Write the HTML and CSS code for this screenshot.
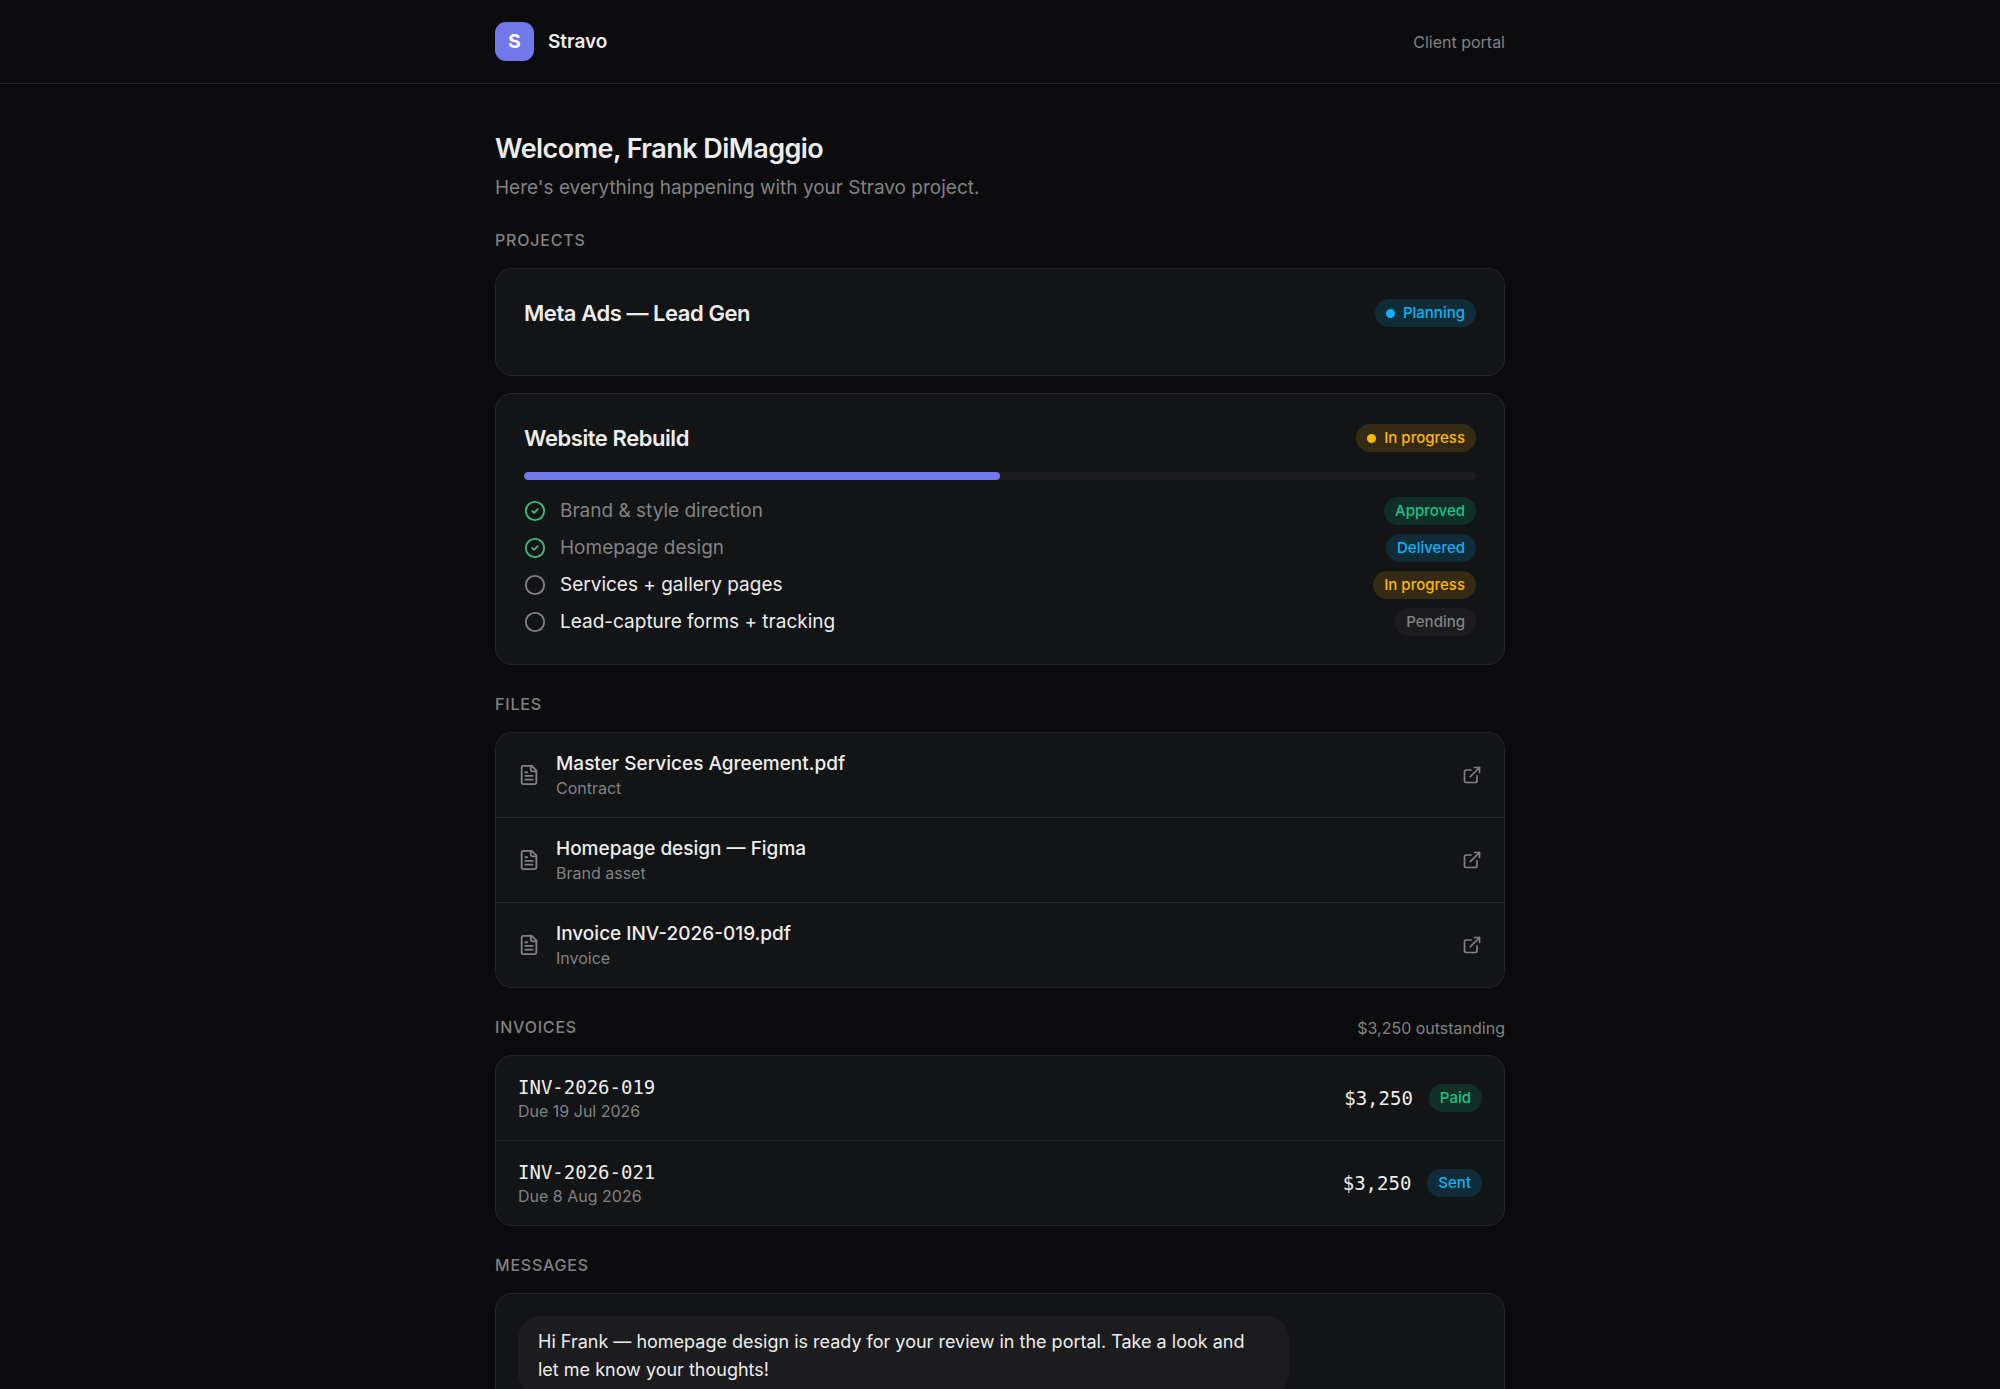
FILE: index.html
```html
<!DOCTYPE html>
<html lang="en">
<head>
  <meta charset="UTF-8" />
  <meta name="viewport" content="width=device-width, initial-scale=1.0"/>
  <title>Stravo | Client portal</title>
  <link rel="stylesheet" href="styles.css">
</head>
<body>
  <!-- shared icons -->
  <svg class="sprite" aria-hidden="true">
    <symbol id="icon-check" viewBox="0 0 24 24">
      <circle cx="12" cy="12" r="10"/>
      <path d="m9 12 2 2 4-4"/>
    </symbol>
    <symbol id="icon-circle" viewBox="0 0 24 24">
      <circle cx="12" cy="12" r="10"/>
    </symbol>
    <symbol id="icon-file" viewBox="0 0 24 24">
      <path d="M15 2H6a2 2 0 0 0-2 2v16a2 2 0 0 0 2 2h12a2 2 0 0 0 2-2V7Z"/>
      <path d="M14 2v4a2 2 0 0 0 2 2h4"/>
      <path d="M10 9H8"/>
      <path d="M16 13H8"/>
      <path d="M16 17H8"/>
    </symbol>
    <symbol id="icon-external" viewBox="0 0 24 24">
      <path d="M15 3h6v6"/>
      <path d="M10 14 21 3"/>
      <path d="M18 13v6a2 2 0 0 1-2 2H5a2 2 0 0 1-2-2V8a2 2 0 0 1 2-2h6"/>
    </symbol>
  </svg>

  <header class="topbar">
    <div class="container topbar-inner">
      <div class="brand">
        <span class="logo">S</span>
        <span class="brand-name">Stravo</span>
      </div>
      <span class="small">Client portal</span>
    </div>
  </header>

  <main class="container">
    <h1>Welcome, Frank DiMaggio</h1>
    <p class="intro">Here's everything happening with your Stravo project.</p>

    <section>
      <div class="section-head"><h2>Projects</h2></div>
      <div class="projects">
        <article class="card project">
          <div class="project-head">
            <h3>Meta Ads — Lead Gen</h3>
            <span class="pill blue"><i class="dot"></i>Planning</span>
          </div>
        </article>

        <article class="card project">
          <div class="project-head">
            <h3>Website Rebuild</h3>
            <span class="pill amber"><i class="dot"></i>In progress</span>
          </div>
          <div class="progress" role="progressbar" aria-valuenow="50" aria-valuemin="0" aria-valuemax="100" aria-label="Website Rebuild">
            <div class="progress-fill" style="width: 50%"></div>
          </div>
          <ul class="milestones">
            <li class="done">
              <svg class="icon"><use href="#icon-check"/></svg>
              <span class="milestone-name">Brand &amp; style direction</span>
              <span class="pill green">Approved</span>
            </li>
            <li class="done">
              <svg class="icon"><use href="#icon-check"/></svg>
              <span class="milestone-name">Homepage design</span>
              <span class="pill blue">Delivered</span>
            </li>
            <li>
              <svg class="icon"><use href="#icon-circle"/></svg>
              <span class="milestone-name">Services + gallery pages</span>
              <span class="pill amber">In progress</span>
            </li>
            <li>
              <svg class="icon"><use href="#icon-circle"/></svg>
              <span class="milestone-name">Lead-capture forms + tracking</span>
              <span class="pill gray">Pending</span>
            </li>
          </ul>
        </article>
      </div>
    </section>

    <section>
      <div class="section-head"><h2>Files</h2></div>
      <div class="card">
        <a class="row" href="#">
          <svg class="icon"><use href="#icon-file"/></svg>
          <span class="row-text">
            <span class="row-title">Master Services Agreement.pdf</span>
            <span class="small">Contract</span>
          </span>
          <svg class="icon icon-sm"><use href="#icon-external"/></svg>
        </a>
        <a class="row" href="#">
          <svg class="icon"><use href="#icon-file"/></svg>
          <span class="row-text">
            <span class="row-title">Homepage design — Figma</span>
            <span class="small">Brand asset</span>
          </span>
          <svg class="icon icon-sm"><use href="#icon-external"/></svg>
        </a>
        <a class="row" href="#">
          <svg class="icon"><use href="#icon-file"/></svg>
          <span class="row-text">
            <span class="row-title">Invoice INV-2026-019.pdf</span>
            <span class="small">Invoice</span>
          </span>
          <svg class="icon icon-sm"><use href="#icon-external"/></svg>
        </a>
      </div>
    </section>

    <section>
      <div class="section-head">
        <h2>Invoices</h2>
        <span class="small">$3,250 outstanding</span>
      </div>
      <div class="card">
        <div class="row">
          <div class="row-text">
            <span class="row-title mono">INV-2026-019</span>
            <span class="small">Due 19 Jul 2026</span>
          </div>
          <span class="mono">$3,250</span>
          <span class="pill green">Paid</span>
        </div>
        <div class="row">
          <div class="row-text">
            <span class="row-title mono">INV-2026-021</span>
            <span class="small">Due 8 Aug 2026</span>
          </div>
          <span class="mono">$3,250</span>
          <span class="pill blue">Sent</span>
        </div>
      </div>
    </section>

    <section>
      <div class="section-head"><h2>Messages</h2></div>
      <div class="card messages">
        <p class="bubble">Hi Frank — homepage design is ready for your review in the portal. Take a look and let me know your thoughts!</p>
      </div>
    </section>
  </main>
</body>
</html>
```

FILE: styles.css
```css
* {
  box-sizing: border-box;
}
body {
  margin: 0;
  background-color: #0c0c0e;
  color: #ededed;
  font-family: Inter, "Liberation Sans", sans-serif;
  font-size: 19px;
  line-height: 28px;
}
h1, h2, h3, p, ul {
  margin: 0;
  padding: 0;
}
a {
  color: inherit;
  text-decoration: none;
}
.sprite {
  display: none;
}
.container {
  max-width: 1010px;
  margin: 0 auto;
}
.small {
  color: #828284;
  font-size: 16px;
  line-height: 22px;
}

/* header */
.topbar {
  border-bottom: 1px solid #222324;
}
.topbar-inner {
  display: flex;
  align-items: center;
  justify-content: space-between;
  padding: 22px 0;
}
.brand {
  display: flex;
  align-items: center;
  gap: 14px;
}
.logo {
  display: grid;
  place-items: center;
  width: 39px;
  height: 39px;
  border-radius: 11px;
  background-color: #7078ea;
  color: #fff;
  font-weight: 700;
}
.brand-name {
  font-weight: 600;
}

main.container {
  padding: 47px 0;
}
h1 {
  font-size: 27px;
  font-weight: 600;
  line-height: 36px;
  letter-spacing: -0.02em;
}
.intro {
  margin-top: 8px;
  color: #828284;
  line-height: 26px;
}

/* sections */
.section-head {
  display: flex;
  align-items: center;
  justify-content: space-between;
  margin: 28px 0 16px;
  height: 23px;
}
h2 {
  color: #828284;
  font-size: 16px;
  font-weight: 500;
  line-height: 23px;
  letter-spacing: 0.05em;
  text-transform: uppercase;
}
.card {
  background-color: #131416;
  border: 1px solid #252628;
  border-radius: 17px;
}

/* projects */
.projects {
  display: grid;
  gap: 17px;
}
.project {
  padding: 28px;
}
.project-head {
  display: flex;
  align-items: center;
  justify-content: space-between;
  margin-bottom: 18px;
}
h3 {
  font-size: 22px;
  font-weight: 600;
  line-height: 32px;
  letter-spacing: -0.02em;
}
.progress {
  height: 8px;
  border-radius: 4px;
  background-color: #1c1c1e;
  overflow: hidden;
}
.progress-fill {
  height: 100%;
  border-radius: 4px;
  background-color: #7078ea;
}
.milestones {
  display: grid;
  gap: 9px;
  margin-top: 17px;
  list-style: none;
}
.milestones li {
  display: flex;
  align-items: center;
  gap: 14px;
}
.milestone-name {
  flex: 1;
}
.done .milestone-name {
  color: #828284;
}
.done .icon {
  color: #3dbb7c;
}

.icon {
  flex: none;
  width: 22px;
  height: 22px;
  color: #828284;
  fill: none;
  stroke: currentColor;
  stroke-width: 2;
  stroke-linecap: round;
  stroke-linejoin: round;
}
.icon-sm {
  width: 20px;
  height: 20px;
}

/* status pills */
.pill {
  display: inline-flex;
  align-items: center;
  gap: 8px;
  padding: 0 11px;
  border-radius: 14px;
  font-size: 15px;
  font-weight: 500;
  line-height: 28px;
}
.dot {
  width: 9px;
  height: 9px;
  border-radius: 50%;
  background-color: currentColor;
}
.blue {
  background-color: #102c38;
  color: #0db4f5;
}
.amber {
  background-color: #352a13;
  color: #ffb900;
}
.green {
  background-color: #102f27;
  color: #17c686;
}
.gray {
  background-color: #1c1c1e;
  color: #828284;
}

/* file and invoice rows */
.row {
  display: flex;
  align-items: center;
  gap: 16px;
  padding: 18px 22px;
}
.row + .row {
  border-top: 1px solid #252628;
}
.row-text {
  display: flex;
  flex: 1;
  flex-direction: column;
}
.row-title {
  font-weight: 500;
  line-height: 26px;
}
.mono {
  font-family: "DejaVu Sans Mono", monospace;
}

/* messages */
.messages {
  padding: 22px;
}
.bubble {
  max-width: 80%;
  padding: 12px 20px;
  border-radius: 23px;
  background-color: #1c1c1e;
  font-size: 18px;
}
```
